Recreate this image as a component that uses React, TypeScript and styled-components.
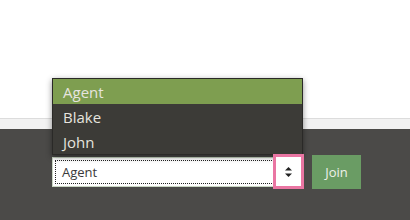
import * as React from "react";
import styled, { createGlobalStyle } from "styled-components";

const GlobalStyle = createGlobalStyle`
  html, body {
    margin: 0;
    padding: 0;
    background: #ffffff;
    font-family: "Open Sans", "DejaVu Sans", sans-serif;
  }
`;

const Page = styled.div`
  width: 410px;
  height: 220px;
  display: flex;
  flex-direction: column;
  overflow: hidden;
`;

const Top = styled.div`
  height: 118px;
  background: #ffffff;
  border-bottom: 1px solid #dcdcdc;
`;

const Band = styled.div`
  height: 10px;
  background: #f2f2f2;
`;

const Footer = styled.div`
  flex: 1;
  background: #4b4a48;
  display: flex;
  align-items: flex-start;
  gap: 9px;
  padding: 26px 0 0 52px;
`;

const SelectWrap = styled.div`
  position: relative;
  margin-top: 2px;
`;

const SelectBox = styled.div`
  width: 251px;
  height: 30px;
  box-sizing: border-box;
  background: #ffffff;
  border: 1px solid #c9d6c3;
  display: flex;
  align-items: stretch;
  padding: 2px 0 2px 2px;
`;

const SelectValue = styled.div`
  flex: 1;
  display: flex;
  align-items: center;
  padding-left: 6px;
  font-size: 13px;
  color: #3a3a3a;
  border: 1px dotted #222;
  border-right: none;
`;

const Arrows = styled.div`
  position: absolute;
  right: -1px;
  top: -3px;
  width: 31px;
  height: 35px;
  box-sizing: border-box;
  border: 3px solid #ea76a3;
  background: #ffffff;
  display: flex;
  align-items: center;
  justify-content: center;
`;

const Menu = styled.ul`
  position: absolute;
  left: 0;
  bottom: 32px;
  width: 249px;
  margin: 0;
  padding: 0;
  list-style: none;
  background: #3c3b37;
  border: 1px solid #2a2927;
  box-shadow: 0 2px 6px rgba(0, 0, 0, 0.45);
`;

const Item = styled.li<{ $active?: boolean }>`
  height: 25px;
  display: flex;
  align-items: center;
  padding-left: 10px;
  font-size: 15px;
  color: #e6e4df;
  background: ${(p) => (p.$active ? "#7e9e50" : "transparent")};
`;

const JoinButton = styled.button`
  width: 49px;
  height: 34px;
  border: none;
  background: #6a9c64;
  color: #eef2ea;
  font-family: "Open Sans", "DejaVu Sans", sans-serif;
  font-size: 13px;
  padding: 0;
`;

const names = ["Agent", "Blake", "John"];

export default function App() {
  return (
    <>
      <GlobalStyle />
      <Page>
        <Top />
        <Band />
        <Footer>
          <SelectWrap>
            <Menu>
              {names.map((n, i) => (
                <Item key={n} $active={i === 0}>
                  {n}
                </Item>
              ))}
            </Menu>
            <SelectBox>
              <SelectValue>Agent</SelectValue>
            </SelectBox>
            <Arrows>
              <svg width="9" height="12" viewBox="0 0 9 12">
                <path d="M4.5 1 L8 4.5 L1 4.5 Z" fill="#222" />
                <path d="M4.5 11 L8 7.5 L1 7.5 Z" fill="#222" />
              </svg>
            </Arrows>
          </SelectWrap>
          <JoinButton>Join</JoinButton>
        </Footer>
      </Page>
    </>
  );
}
